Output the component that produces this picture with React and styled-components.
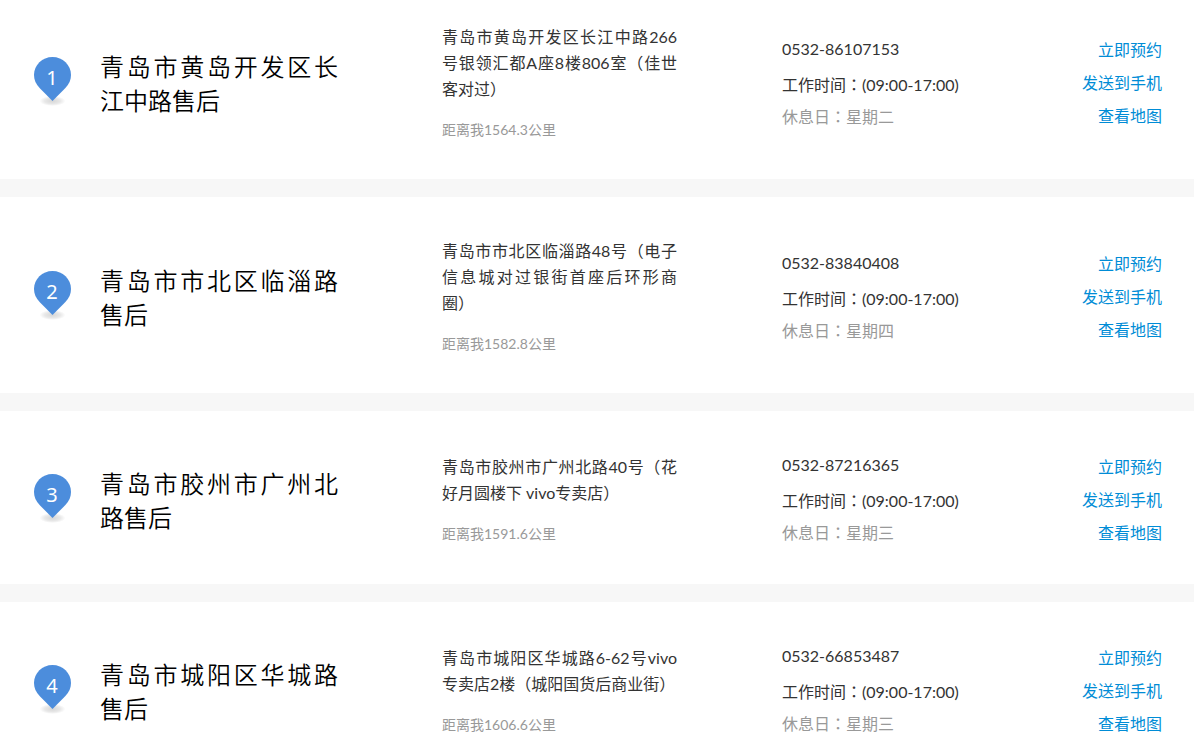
import styled, { createGlobalStyle } from 'styled-components';

const GlobalStyle = createGlobalStyle`
  * {
    box-sizing: border-box;
  }
  body {
    margin: 0;
    background: #fff;
    font-family: Lato, "Noto Sans CJK SC", sans-serif;
    font-size: 16px;
    line-height: 24px;
    color: #333;
    text-spacing-trim: space-all;
  }
`;

const List = styled.ul`
  display: flex;
  flex-direction: column;
  gap: 18px;
  margin: 0;
  padding: 0;
  list-style: none;
  background: #f7f7f7;
`;

const Row = styled.li`
  display: grid;
  grid-template-columns: 66px 342fr 340fr 280fr 100fr;
  align-items: center;
  padding: 41px 32px 39px 34px;
  background: #fff;

  &:first-child {
    padding-top: 24px;
  }
`;

const PinIcon = styled.svg`
  display: block;
  width: 37px;
  height: 50px;

  text {
    font-family: "Noto Sans", sans-serif;
    font-size: 20px;
    fill: #fff;
    text-anchor: middle;
  }
`;

const Title = styled.h2`
  max-width: 238px;
  margin: 0;
  padding-top: 4px;
  font-size: 24px;
  font-weight: 350;
  line-height: 34px;
  text-align: justify;
  color: #000;
`;

const Location = styled.div`
  max-width: 235px;
`;

const Address = styled.p`
  margin: 0 0 18px;
  line-height: 26px;
  text-align: justify;
`;

const Distance = styled.p`
  margin: 0;
  font-size: 14px;
  line-height: 20px;
  color: #999;
`;

const Contact = styled.div`
  display: flex;
  flex-direction: column;
  padding-top: 1px;
`;

const Phone = styled.span`
  margin-bottom: 12px;
`;

const Hours = styled.span`
  margin-bottom: 8px;
`;

const RestDay = styled.span`
  color: #999;
`;

// the TC face centres the full-width colon in its cell
const Colon = styled.span.attrs({ lang: 'zh-TW' })`
  font-family: "Noto Sans CJK TC", sans-serif;
  line-height: 1;
`;

const Actions = styled.div`
  display: flex;
  flex-direction: column;
  align-items: flex-end;
  gap: 9px;
  padding-top: 2px;
  white-space: nowrap;
`;

const ActionLink = styled.a`
  color: #008cd6;
  text-decoration: none;

  &:hover {
    text-decoration: underline;
  }
`;

const stores = [
  {
    name: '青岛市黄岛开发区长江中路售后',
    address: '青岛市黄岛开发区长江中路266号银领汇都A座8楼806室（佳世客对过）',
    distance: '1564.3',
    phone: '0532-86107153',
    rest: '星期二',
  },
  {
    name: '青岛市市北区临淄路售后',
    address: '青岛市市北区临淄路48号（电子信息城对过银街首座后环形商圈）',
    distance: '1582.8',
    phone: '0532-83840408',
    rest: '星期四',
  },
  {
    name: '青岛市胶州市广州北路售后',
    address: '青岛市胶州市广州北路40号（花好月圆楼下 vivo专卖店）',
    distance: '1591.6',
    phone: '0532-87216365',
    rest: '星期三',
  },
  {
    name: '青岛市城阳区华城路售后',
    address: '青岛市城阳区华城路6-62号vivo专卖店2楼（城阳国货后商业街）',
    distance: '1606.6',
    phone: '0532-66853487',
    rest: '星期三',
  },
];

function Pin({ number }) {
  return (
    <PinIcon viewBox="0 0 37 50">
      <defs>
        <radialGradient id={`shade-${number}`}>
          <stop offset="0" stopColor="#000" stopOpacity="0.16" />
          <stop offset="0.6" stopColor="#000" stopOpacity="0.09" />
          <stop offset="1" stopColor="#000" stopOpacity="0" />
        </radialGradient>
      </defs>
      <ellipse cx="18.5" cy="44" rx="13" ry="5" fill={`url(#shade-${number})`} />
      <path
        d="M18.5 0C8.3 0 0 8 0 18c0 5 2 9.300 5.600 13L18.500 44l12.900-13C35 27.300 37 23 37 18 37 8 28.700 0 18.500 0z"
        fill="#4c8ddc"
      />
      <text x="18" y="28">{number}</text>
    </PinIcon>
  );
}

function StoreRow({ number, name, address, distance, phone, rest }) {
  return (
    <Row>
      <Pin number={number} />
      <Title>{name}</Title>
      <Location>
        <Address>{address}</Address>
        <Distance>距离我{distance}公里</Distance>
      </Location>
      <Contact>
        <Phone>{phone}</Phone>
        <Hours>工作时间<Colon>：</Colon>(09:00-17:00)</Hours>
        <RestDay>休息日<Colon>：</Colon>{rest}</RestDay>
      </Contact>
      <Actions>
        <ActionLink href="#book">立即预约</ActionLink>
        <ActionLink href="#send">发送到手机</ActionLink>
        <ActionLink href="#map">查看地图</ActionLink>
      </Actions>
    </Row>
  );
}

export default function App() {
  return (
    <>
      <GlobalStyle />
      <List lang="zh-CN">
        {stores.map((store, index) => (
          <StoreRow {...store} number={index + 1} key={store.phone} />
        ))}
      </List>
    </>
  );
}
